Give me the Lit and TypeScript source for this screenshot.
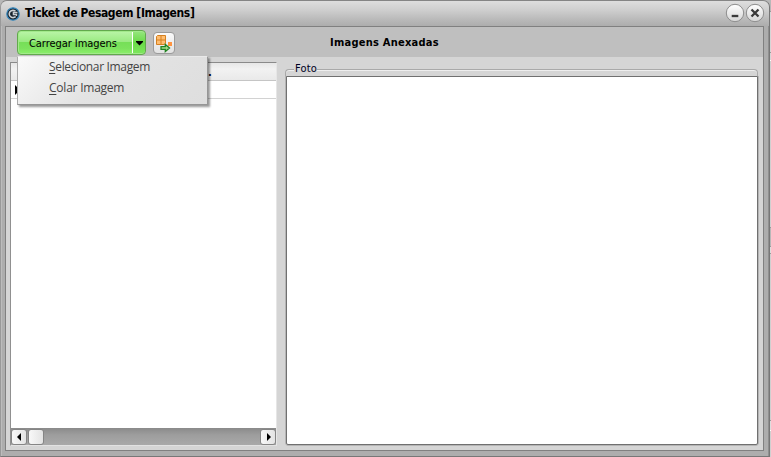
import { LitElement, html, css } from "lit";
import { customElement } from "lit/decorators.js";

@customElement("app-root")
export class AppRoot extends LitElement {
  static styles = css`
    :host {
      display: block;
      position: relative;
      width: 771px;
      height: 457px;
      overflow: hidden;
      background: linear-gradient(#b8b8b8 0 11px, #999 11px 12px, #d6d6d6 12px 52px, #999 52px 53px, #d6d6d6 53px 60px, #fff 60px 61px, #d0d0d0 61px 227px, #999 227px 228px, #b8b8b8 228px 246px, #999 246px 247px, #ddd 247px 253px, #999 253px 254px, #d0d0d0 254px 420px, #999 420px 421px, #ddd 421px 430px, #fff 430px 431px, #d0d0d0 431px);
      font-family: "DejaVu Sans Condensed", "DejaVu Sans", sans-serif;
      font-stretch: condensed;
      font-size: 11px;
      color: #000;
    }
    * { box-sizing: border-box; }
    svg { display: block; }
    .window {
      width: 770px;
      height: 457px;
      display: flex;
      flex-direction: column;
      border: 1px solid #777;
      border-left-color: #999;
      border-top-color: #858585;
      border-radius: 7px 7px 0 0;
      background: #adadad;
      padding: 0 5px 5px 4px;
      box-shadow: inset -1px 0 #8f8f8f, inset 1px 0 #bcbcbc;
    }
    .title {
      height: 25px;
      flex: none;
      margin: 0 -5px 0 -4px;
      padding: 0 4px 1px 5px;
      display: flex;
      align-items: center;
      border-radius: 6px 6px 0 0;
      background: linear-gradient(#dedede, #cfcfcf 35%, #b9b9b9 75%, #adadad);
    }
    .logo { margin-top: 2px; }
    .name {
      margin-left: 5px;
      flex: 1;
      font-size: 12px;
      font-weight: bold;
      white-space: nowrap;
      letter-spacing: -0.39px;
    }
    .controls { display: flex; }
    .client {
      flex: 1;
      display: flex;
      flex-direction: column;
      border: 1px solid #808080;
      background: #d5d5d5;
    }
    .toolbar {
      height: 30px;
      flex: none;
      background: #bfbfbf;
      padding: 3px 0 0 11px;
      display: flex;
    }
    .split {
      width: 129px;
      height: 25px;
      display: flex;
      border: 1px solid #62a94d;
      border-radius: 4px;
      box-shadow: inset 0 0 0 1px #a2e98b;
      background: linear-gradient(#baf5a8, #9bea83 46%, #76df58 50%, #7ce25d 75%, #8cf06c);
    }
    .label {
      width: 114px;
      padding-left: 11px;
      line-height: 25px;
      white-space: nowrap;
      letter-spacing: -0.06px;
    }
    .drop {
      flex: 1;
      border-left: 1px solid #fff;
      margin: 1px 0;
      background: linear-gradient(#93e57b, #6ada48 50%, #7ce65c);
      border-radius: 0 3px 3px 0;
      padding: 9px 0 0 3px;
    }
    .tool {
      width: 22px;
      height: 22px;
      margin: 2px 0 0 7px;
      border: 1px solid #9b9b9b;
      border-radius: 4px;
      background: linear-gradient(#fafafa, #e2e2e2);
    }
    .heading {
      margin-left: 155px;
      line-height: 26px;
      font-weight: bold;
      white-space: nowrap;
      letter-spacing: 0.24px;
    }
    .body {
      flex: 1;
      display: flex;
      padding: 5px 5px 5px 4px;
      gap: 8px;
    }
    .grid {
      width: 267px;
      border: 1px solid #909090;
      border-top-color: #8a8a8a;
      border-right-color: #e6e6e6;
      border-bottom-color: #e2e2e2;
      background: #fff;
      display: flex;
      flex-direction: column;
      margin-bottom: -1px;
    }
    .head {
      height: 18px;
      background: linear-gradient(#e7e7e7, #f2f2f2 35%, #e9e9e9);
      border-bottom: 1px solid #c5c5c5;
      padding-left: 197px;
      line-height: 20px;
      font-weight: bold;
      color: #002;
    }
    .row {
      height: 18px;
      border-bottom: 1px solid #d2d2d2;
      padding: 4px 0 0 4px;
    }
    .rows { flex: 1; }
    .scroll {
      height: 17px;
      display: flex;
      gap: 1px;
      background: linear-gradient(#8a8a8a, #9d9d9d 40%, #a9a9a9);
    }
    .btn {
      width: 16px;
      height: 16px;
      margin-top: 1px;
      border: 1px solid #858585;
      border-radius: 3px;
      background: linear-gradient(90deg, #f8f8f8, #e3e3e3);
      padding: 2px 0 0 5px;
    }
    .btn.last { margin-left: auto; }
    .group {
      flex: 1;
      display: flex;
      flex-direction: column;
    }
    .legend {
      height: 14px;
      display: flex;
      align-items: flex-start;
      line-height: 13px;
    }
    .legend span { padding: 0 0 0 1px; letter-spacing: 0.2px; color: #002; }
    .edge {
      height: 7px;
      margin-top: 7px;
      border-top: 1px solid #a9a9a9;
      box-shadow: inset 0 1px #eee;
    }
    .edge.left { width: 9px; border-left: 1px solid #a9a9a9; border-top-left-radius: 4px; }
    .edge.right { flex: 1; border-right: 1px solid #a9a9a9; border-top-right-radius: 4px; }
    .photo {
      flex: 1;
      margin-left: 1px;
      border: 1px solid #707070;
      border-radius: 0 0 2px 2px;
      background: #fff;
      box-shadow: 0 1px #b5b5b5, 1px 0 #b5b5b5, -1px 0 #b5b5b5;
    }
    .menu {
      position: absolute;
      left: 17px;
      top: 56px;
      width: 191px;
      height: 49px;
      border: 1px solid #969696;
      border-top-color: #e9e9e9;
      border-left-color: #aaa;
      background: linear-gradient(135deg, #fafafa, #e3e3e3 45%, #dedede);
      box-shadow: 2px 2px 2px rgba(0, 0, 0, 0.4);
      font: 12px "Open Sans", "Noto Sans", sans-serif;
      letter-spacing: -0.33px;
      color: #444;
    }
    .item {
      height: 21px;
      line-height: 19px;
      padding-left: 31px;
      white-space: nowrap;
    }
    .item.wide { letter-spacing: -0.23px; }
    .item u { text-underline-offset: 2px; }
  `;

  private control(close: boolean) {
    return html`<svg width="20" height="20" viewBox="0 0 20 20">
      <defs><linearGradient id="g" x2="0" y2="1"><stop stop-color="#fff" /><stop offset="1" stop-color="#d5d5d5" /></linearGradient></defs>
      <circle cx="10" cy="10" r="8.7" fill="url(#g)" stroke="#8d8d8d" />
      <path d=${close ? "M6.5 6.5L13.5 13.5M13.5 6.5L6.5 13.5" : "M6.7 13H13.3"} stroke="#3a3a3a" stroke-width="2.3" />
    </svg>`;
  }

  private arrow(path: string) {
    return html`<svg width="9" height="11"><path d=${path} fill="#000" /></svg>`;
  }

  render() {
    return html`
      <div class="window">
        <div class="title">
          <svg class="logo" width="14" height="14" viewBox="0 0 14 14">
            <circle cx="7" cy="7" r="6.2" fill="#17222d" stroke="#388ac0" stroke-width="1.2" />
            <path d="M9.500 4.200C6.500 2.200 3.200 4 3.200 7s3.500 4.800 6.500 2.700" fill="none" stroke="#cbd1d5" stroke-width="1.6" />
            <path d="M11.500 5.500H7.400V7.500H10.500V9" fill="none" stroke="#c8ced2" stroke-width="1.4" />
          </svg>
          <div class="name">Ticket de Pesagem [Imagens]</div>
          <div class="controls">${this.control(false)}${this.control(true)}</div>
        </div>
        <div class="client">
          <div class="toolbar">
            <div class="split">
              <div class="label">Carregar Imagens</div>
              <div class="drop">${this.arrow("M0 0H7V1L3.5 4.500L0 1Z")}</div>
            </div>
            <div class="tool">
              <svg width="20" height="20" viewBox="0 0 20 20">
                <path d="M2.500 3.500l1-1h8v8l-1 1h-8z" fill="#ffbd70" stroke="#d58020" />
                <path d="M7 3v8.500M3 7h8.500" stroke="#d58020" />
                <path d="M14 9h4v4h-4z" fill="#ff9440" />
                <path d="M7 13.700h4.300v-2.200l4.200 3.500-4.200 3.500v-2.200H7z" fill="#a5dc8b" stroke="#218321" stroke-width="1.300" />
              </svg>
            </div>
            <div class="heading">Imagens Anexadas</div>
          </div>
          <div class="body">
            <div class="grid">
              <div class="head">.</div>
              <div class="row">${this.arrow("M0 0V10L5 5Z")}</div>
              <div class="rows"></div>
              <div class="scroll">
                <div class="btn">${this.arrow("M4 1V9L0 5Z")}</div>
                <div class="btn"></div>
                <div class="btn last">${this.arrow("M1 1V9L5 5Z")}</div>
              </div>
            </div>
            <div class="group">
              <div class="legend"><div class="edge left"></div><span>Foto</span><div class="edge right"></div></div>
              <div class="photo"></div>
            </div>
          </div>
        </div>
      </div>
      <div class="menu">
        <div class="item">
          <u>S</u>elecionar Imagem
        </div>
        <div class="item wide">
          <u>C</u>olar Imagem
        </div>
      </div>
    `;
  }
}
